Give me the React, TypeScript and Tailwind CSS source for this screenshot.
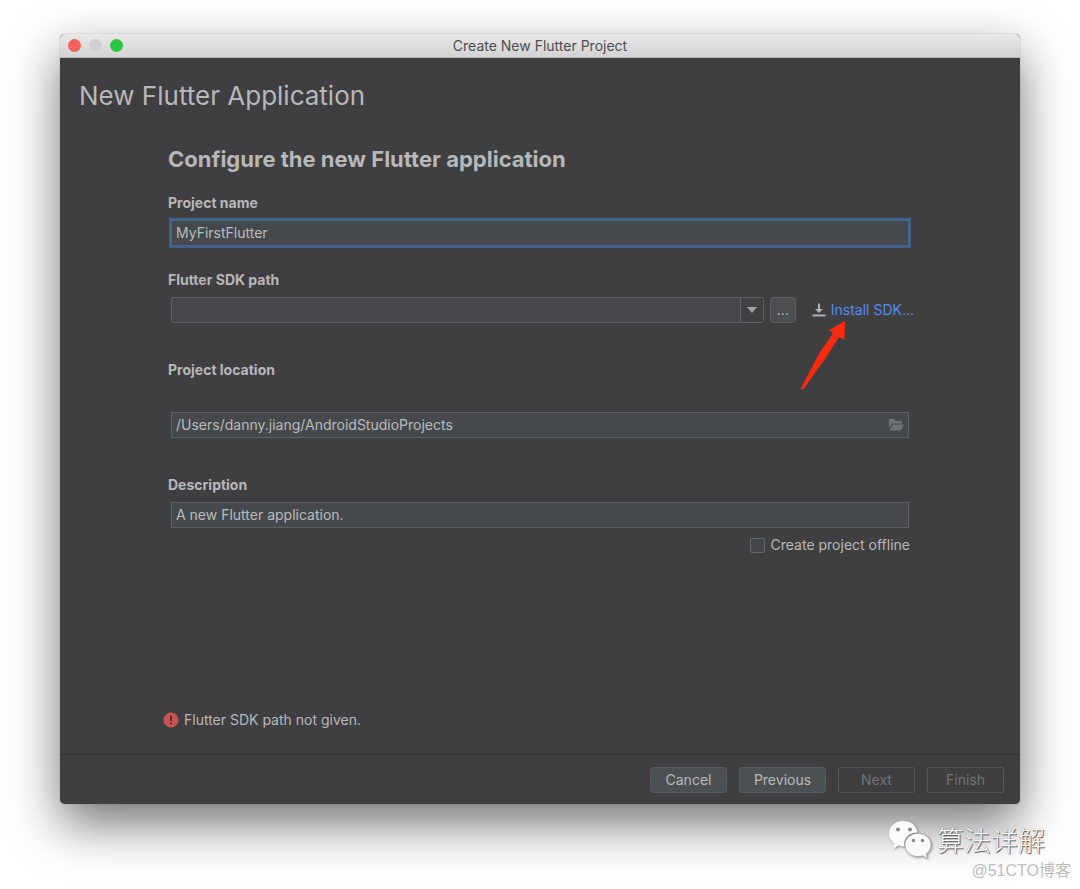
import React from 'react'
import clsx from 'clsx'

const inputClass =
  'h-[26px] w-full border border-[#5d6062] bg-[#46494b] px-1 pb-0.5 text-sm text-[#b9bbbd] outline-none'

const labelClass = 'block text-sm font-bold leading-5 text-[#b7b8ba]'

const DownloadIcon = () => (
  <svg width="14" height="14" viewBox="0 0 14 14" fill="#afb1b3" aria-hidden="true">
    <path d="M6 0.5h2v5.500h3L7 10 3 6h3z" />
    <path d="M0.5 11.500h13v2h-13z" />
  </svg>
)

const FolderIcon = () => (
  <svg width="16" height="14" viewBox="0 0 16 14" fill="#6c7479" aria-hidden="true">
    <path d="M1 1h5l1.500 2H14v2.500H4L1 10.500z" />
    <path d="M4.500 6.500H16l-3 6H1.500z" />
  </svg>
)

const ErrorIcon = () => (
  <svg width="16" height="16" viewBox="0 0 16 16" aria-hidden="true">
    <circle cx="8" cy="8" r="7.500" fill="#c75450" />
    <path d="M7 3.500h2v5.500H7z M7 10.500h2v2H7z" fill="#4a3334" />
  </svg>
)

const PointerArrow = () => (
  <svg
    className="pointer-events-none absolute left-[-12px] top-5"
    width="46"
    height="72"
    viewBox="0 0 46 72"
    aria-hidden="true"
  >
    <path d="M45 1L29 10l4 3.500L20 32 1 68q0 2.500 2.500 1L27 36l12-19 5.500 2.500z" fill="#fb2a0c" />
  </svg>
)

const ChatLogo = () => (
  <svg
    className="drop-shadow-[1px_1px_1px_rgba(0,0,0,0.4)]"
    width="44"
    height="40"
    viewBox="0 0 44 40"
    aria-hidden="true"
  >
    <path
      d="M15.500 1C7 1 1 6.500 1 13.500c0 4 2 7.500 5.500 10L5 29l5.500-3.500c2 .7 4 .9 6 .8-2-8 5-14 13-13.800C28.500 5.500 23 1 15.500 1z"
      fill="#fbfbfb"
    />
    <path
      d="M30 13.500c-7.500 0-13 5-13 11.500s5.500 11.500 13 11.500c1.700 0 3.300-.2 4.800-.8l4.700 2.800-1.300-4.500c3-2.200 4.800-5.300 4.800-9 0-6.500-5.700-11.500-13-11.500z"
      fill="#fbfbfb"
      stroke="#999"
      strokeWidth="0.600"
    />
    <g fill="#888">
      <circle cx="10" cy="9.500" r="1.900" />
      <circle cx="22" cy="9.500" r="1.900" />
      <circle cx="25.500" cy="20.500" r="1.700" />
      <circle cx="34.500" cy="20.500" r="1.700" />
    </g>
  </svg>
)

const TitleBar = () => (
  <div className="relative flex h-6 items-center justify-center rounded-t-[5px] border-b border-[#b5b5b5] bg-linear-to-b from-[#e9e9ea] to-[#d3d3d4]">
    <div className="absolute left-2 flex gap-2">
      <button type="button" aria-label="Close" className="size-[13px] rounded-full bg-[#f0625a]" />
      <button type="button" aria-label="Minimize" className="size-[13px] rounded-full bg-[#d0d0cf]" />
      <button type="button" aria-label="Zoom" className="size-[13px] rounded-full bg-[#2dc544]" />
    </div>
    <span className="text-sm text-[#4d4d4d]">Create New Flutter Project</span>
  </div>
)

type FooterButtonProps = {
  label: string
  disabled?: boolean
  wide?: boolean
}

const FooterButton = ({ label, disabled, wide }: FooterButtonProps) => (
  <button
    type="button"
    disabled={disabled}
    className={clsx(
      'h-[26px] rounded-[3px] border text-sm',
      wide ? 'w-[87px]' : 'w-[77px]',
      disabled ? 'border-[#56585a] text-[#717375]' : 'border-[#565b5d] bg-[#4b5052] text-[#b9bbbd]'
    )}
  >
    {label}
  </button>
)

const App = () => {
  return (
    <div className="relative flex min-h-screen flex-col overflow-hidden bg-white px-[60px] pt-[34px] pb-[85px] font-['Inter','Liberation_Sans',sans-serif]">
      <main className="flex flex-1 flex-col rounded-[5px] bg-[#3f3f41] shadow-[0_0_1px_rgba(0,0,0,0.5),0_20px_50px_rgba(0,0,0,0.55)]">
        <TitleBar />
        <h1 className="mt-[22px] px-[19px] text-[26px] leading-8 text-[#b7b8ba]">New Flutter Application</h1>

        <form className="flex flex-1 flex-col px-[108px]">
          <h2 className="mt-[33px] text-[22px] font-bold leading-7 text-[#b7b8ba]">
            Configure the new Flutter application
          </h2>

          <label htmlFor="name" className={clsx(labelClass, 'mt-5')}>Project name</label>
          <div className="mx-[3px] mt-[7px] flex">
            <input
              id="name"
              defaultValue="MyFirstFlutter"
              className="h-[26px] w-full border border-[#46658c] bg-[#46494b] px-1 pb-0.5 text-sm text-[#b9bbbd] outline-2 outline-[#42618a]"
            />
          </div>

          <label htmlFor="sdk" className={clsx(labelClass, 'mt-6')}>Flutter SDK path</label>
          <div className="-mr-0.5 ml-[3px] mt-[7px] flex items-center">
            <div className="relative flex flex-1">
              <select
                id="sdk"
                className="h-[26px] w-full appearance-none rounded-[2px] border border-[#5d6062] bg-[#46474a] px-1 text-sm text-[#b9bbbd]"
              >
                <option value=""></option>
              </select>
              <span className="pointer-events-none absolute inset-y-px right-px flex w-[23px] items-center justify-center border-l border-[#5d6062] bg-[#3f4143]">
                <svg width="10" height="6" viewBox="0 0 10 6" fill="#9fa1a3" aria-hidden="true">
                  <path d="M0 0h10L5 6z" />
                </svg>
              </span>
            </div>
            <button
              type="button"
              aria-label="Browse"
              className="ml-1.5 h-[26px] w-[26px] rounded-[3px] border border-[#5a5d5f] bg-[#4c4e50] text-sm text-[#b9bbbd]"
            >
              ...
            </button>
            <div className="relative ml-4 flex items-center gap-[5px]">
              <DownloadIcon />
              <a href="#install" className="text-sm text-[#548af0]">Install SDK...</a>
              <PointerArrow />
            </div>
          </div>

          <label htmlFor="location" className={clsx(labelClass, 'mt-[37px]')}>Project location</label>
          <div className="relative mx-[3px] mt-8 flex">
            <input id="location" defaultValue="/Users/danny.jiang/AndroidStudioProjects" className={inputClass} />
            <button type="button" aria-label="Choose folder" className="absolute inset-y-0 right-[5px] flex items-center">
              <FolderIcon />
            </button>
          </div>

          <label htmlFor="description" className={clsx(labelClass, 'mt-[37px]')}>Description</label>
          <div className="mx-[3px] mt-[7px] flex">
            <input id="description" defaultValue="A new Flutter application." className={inputClass} />
          </div>

          <label className="mr-[2px] mt-[7px] flex items-center gap-1.5 self-end text-sm text-[#b7b8ba]">
            <input
              type="checkbox"
              className="size-[15px] appearance-none rounded-[2px] border border-[#64676a] bg-[#434648] checked:bg-[#548af0]"
            />
            Create project offline
          </label>

          <p role="alert" className="-ml-[5px] mt-auto mb-6 flex items-center gap-[5px] text-sm text-[#b7b8ba]">
            <ErrorIcon />
            Flutter SDK path not given.
          </p>
        </form>

        <footer className="flex h-[50px] items-center justify-end gap-3 border-t border-[#333436] px-4">
          <FooterButton label="Cancel" />
          <FooterButton label="Previous" wide />
          <FooterButton label="Next" disabled />
          <FooterButton label="Finish" disabled />
        </footer>
      </main>

      <div className="absolute bottom-[29px] right-[35px] flex items-center gap-[5px]">
        <ChatLogo />
        <span className="font-['Noto_Sans_CJK_SC',sans-serif] text-[27px] font-light leading-10 text-white [text-shadow:1px_1px_1px_#555,0_0_1px_#777]">
          算法详解
        </span>
      </div>
      <span className="absolute bottom-[6px] right-[9px] font-['Liberation_Sans','Noto_Sans_CJK_SC',sans-serif] text-base leading-6 text-[#bcbcbc]">
        @51CTO博客
      </span>
    </div>
  )
}

export default App
